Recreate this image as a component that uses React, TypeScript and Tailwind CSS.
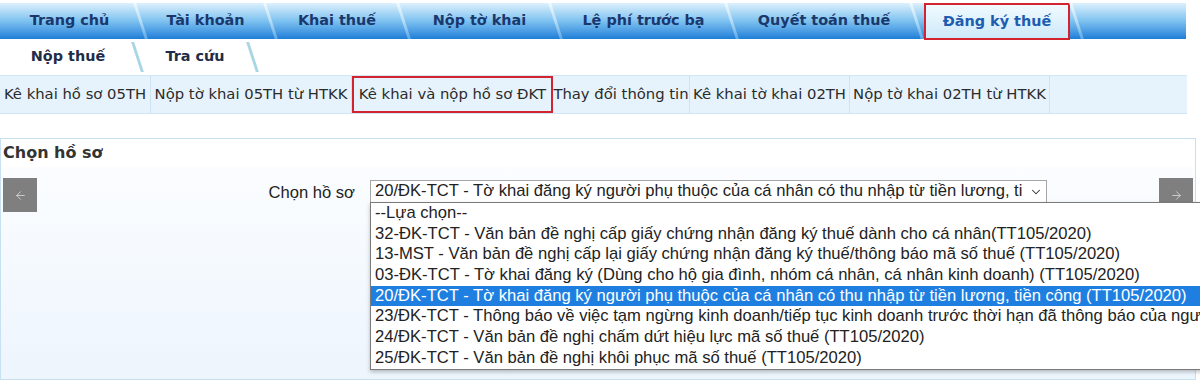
import React from 'react';
import { ChevronDown, ArrowLeft, ArrowRight } from 'lucide-react';

const mainTabs = [
  { label: 'Trang chủ', w: 142 },
  { label: 'Tài khoản', w: 130 },
  { label: 'Khai thuế', w: 133 },
  { label: 'Nộp tờ khai', w: 152 },
  { label: 'Lệ phí trước bạ', w: 176 },
  { label: 'Quyết toán thuế', w: 185 },
];

const subTabs = [
  { label: 'Nộp thuế', w: 138 },
  { label: 'Tra cứu', w: 114 },
];

const menuItems = [
  { label: 'Kê khai hồ sơ 05TH', w: 151 },
  { label: 'Nộp tờ khai 05TH từ HTKK', w: 201 },
  { label: 'Kê khai và nộp hồ sơ ĐKT', w: 201, marked: true },
  { label: 'Thay đổi thông tin', w: 137 },
  { label: 'Kê khai tờ khai 02TH', w: 160 },
  { label: 'Nộp tờ khai 02TH từ HTKK', w: 200 },
];

const options = [
  '--Lựa chọn--',
  '32-ĐK-TCT - Văn bản đề nghị cấp giấy chứng nhận đăng ký thuế dành cho cá nhân(TT105/2020)',
  '13-MST - Văn bản đề nghị cấp lại giấy chứng nhận đăng ký thuế/thông báo mã số thuế (TT105/2020)',
  '03-ĐK-TCT - Tờ khai đăng ký (Dùng cho hộ gia đình, nhóm cá nhân, cá nhân kinh doanh) (TT105/2020)',
  '20/ĐK-TCT - Tờ khai đăng ký người phụ thuộc của cá nhân có thu nhập từ tiền lương, tiền công (TT105/2020)',
  '23/ĐK-TCT - Thông báo về việc tạm ngừng kinh doanh/tiếp tục kinh doanh trước thời hạn đã thông báo của người nộp thuế',
  '24/ĐK-TCT - Văn bản đề nghị chấm dứt hiệu lực mã số thuế (TT105/2020)',
  '25/ĐK-TCT - Văn bản đề nghị khôi phục mã số thuế (TT105/2020)',
];

function Slash({ light }: { light?: boolean }) {
  return (
    <div
      className={`w-[3px] h-full shrink-0 -skew-x-[-18deg] ${
        light ? 'bg-[#a9d6e4]' : 'bg-gradient-to-b from-[#f2fbff] via-[#b8def6] to-[#5aa8e6]'
      }`}
    />
  );
}

export default function App() {
  return (
    <div className="w-[1200px] h-[391px] bg-white overflow-hidden relative font-['DejaVu_Sans',sans-serif]">
      {/* main tabs */}
      <div className="mt-[3px] w-[1186px] h-[36px] flex bg-gradient-to-b from-[#dcf0fc] via-[#7dc2f0] to-[#1b7ed8]">
        {mainTabs.map((t) => (
          <React.Fragment key={t.label}>
            <div
              className="h-full flex items-center justify-center text-[14.4px] font-bold text-[#1a386d]"
              style={{ width: t.w - 3 }}
            >
              {t.label}
            </div>
            <Slash />
          </React.Fragment>
        ))}
        <div className="w-[6px] h-full shrink-0" />
        <div className="w-[146px] h-[37px] border-2 border-[#d3232f] bg-gradient-to-b from-[#f1faff] to-[#cde9f9] flex items-center justify-center text-[14.4px] font-bold text-[#1e5cb0] shrink-0">
          Đăng ký thuế
        </div>
        <div className="w-[5px] shrink-0" />
        <Slash />
        <div className="flex-1" />
      </div>

      {/* sub tabs */}
      <div className="h-[36px] flex py-[3px]">
        {subTabs.map((t) => (
          <React.Fragment key={t.label}>
            <div
              className="h-full flex items-center justify-center text-[14.4px] font-bold text-[#1f2d48]"
              style={{ width: t.w - 2 }}
            >
              {t.label}
            </div>
            <Slash light />
          </React.Fragment>
        ))}
      </div>

      {/* sub menu */}
      <div className="w-[1187px] h-[39px] flex bg-[#e7f3fc] border-y border-[#d2e6f3]">
        {menuItems.map((m) => (
          <div
            key={m.label}
            className={`h-full flex items-center justify-center text-[14.8px] text-[#2b2b2b] whitespace-nowrap shrink-0 ${
              m.marked ? 'border-2 border-[#d3232f]' : 'border-r border-[#cfe2ef]'
            }`}
            style={{ width: m.w }}
          >
            {m.label}
          </div>
        ))}
      </div>

      {/* section */}
      <div className="mt-[24px] w-[1196px] h-[242px] border border-[#c8e1f1] flex flex-col">
        <div className="h-[28px] bg-white flex items-center pl-[2px] text-[16px] font-bold text-[#333]">
          Chọn hồ sơ
        </div>
        <div className="flex-1 bg-gradient-to-b from-[#fbfdff] to-[#edf5fd] pt-[11px] flex items-start px-[2px] font-['Liberation_Sans',Arial,sans-serif]">
          <div className="w-[34px] h-[34px] bg-[#7f7f7f] flex items-center justify-center shrink-0">
            <ArrowLeft className="w-[13px] h-[13px] text-[#dcdcdc]" strokeWidth={1.5} />
          </div>
          <div className="w-[318px] text-right text-[16.6px] text-[#222] pt-[3px] shrink-0">Chọn hồ sơ</div>
          <div className="relative ml-[15px] mt-[2px]">
            <div className="w-[677px] h-[23px] border border-[#a6a6a6] bg-white flex items-center pl-[4px] text-[16.6px] text-[#222] whitespace-nowrap overflow-hidden">
              <span className="flex-1 overflow-hidden">
                20/ĐK-TCT - Tờ khai đăng ký người phụ thuộc của cá nhân có thu nhập từ tiền lương, ti
              </span>
              <ChevronDown className="w-[14px] h-[14px] mx-[3px] text-[#333] shrink-0" strokeWidth={1.8} />
            </div>
            <div className="absolute left-0 top-[22px] w-[900px] bg-white border border-[#7a7a7a] shadow-[0_2px_4px_rgba(0,0,0,0.25)] z-10">
              {options.map((o, i) => (
                <div
                  key={o}
                  className={`h-[20.7px] leading-[20.7px] pl-[4px] text-[16.6px] whitespace-nowrap ${
                    i === 4 ? 'bg-[#1e7fe1] text-white' : 'text-[#222]'
                  }`}
                >
                  {o}
                </div>
              ))}
            </div>
          </div>
          <div className="flex-1" />
          <div className="w-[34px] h-[34px] bg-[#7f7f7f] flex items-center justify-center shrink-0">
            <ArrowRight className="w-[13px] h-[13px] text-[#dcdcdc]" strokeWidth={1.5} />
          </div>
        </div>
      </div>
    </div>
  );
}
